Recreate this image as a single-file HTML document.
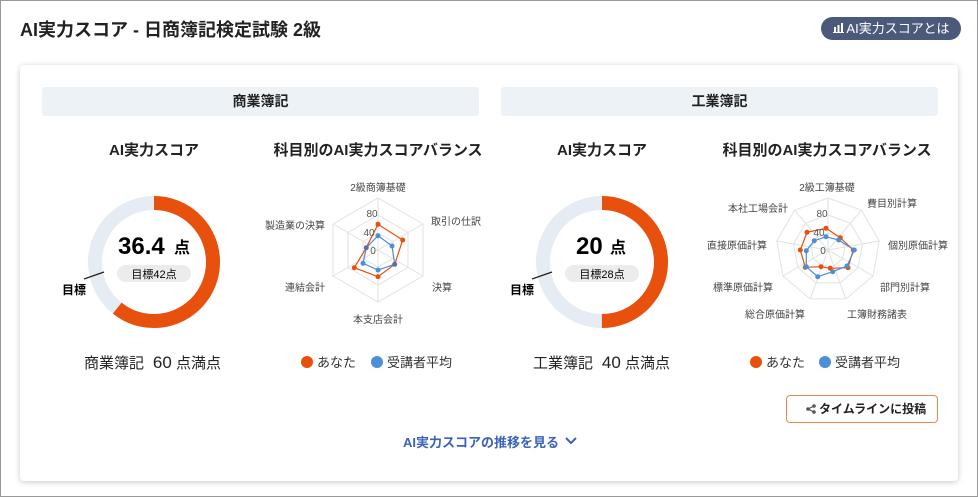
<!DOCTYPE html>
<html><head><meta charset="utf-8"><style>
*{margin:0;padding:0;box-sizing:border-box}
body{width:978px;height:497px;background:#fff;font-family:"Liberation Sans","Noto Sans CJK JP",sans-serif;color:#222;position:relative;overflow:hidden}
.frame{position:absolute;left:0;top:0;width:978px;height:497px;border:1px solid #999}
.t{position:absolute;white-space:nowrap}
.card{position:absolute;left:20px;top:65px;width:938px;height:416px;background:#fff;box-shadow:0 1px 6px rgba(0,0,0,.22);border-radius:4px}
.bar{position:absolute;top:87px;height:29px;background:#edf2f7;border-radius:3px;font-weight:bold;font-size:14px;text-align:center;line-height:29px}
svg{position:absolute;left:0;top:0}
.ic{position:static;display:inline-block;vertical-align:middle}
</style></head><body>
<div class="frame"></div>
<div class="t" style="left:20px;top:16px;font-size:18px;font-weight:bold">AI実力スコア - 日商簿記検定試験 2級</div>
<div class="t" style="left:821px;top:17px;width:140px;height:23px;border-radius:12px;background:#4b5a7b;color:#fff;font-size:13px;line-height:23px;text-align:center"><svg class="ic" width="11" height="10" viewBox="0 0 11 10" style="margin-top:-3px"><rect x="1" y="4" width="2" height="5" fill="#fff"/><rect x="4.5" y="2" width="2" height="7" fill="#fff"/><rect x="8" y="0" width="2" height="9" fill="#fff"/><rect x="0" y="9" width="11" height="1" fill="#fff"/></svg> AI実力スコアとは</div>
<div class="card"></div>
<div class="bar" style="left:42px;width:437px">商業簿記</div>
<div class="bar" style="left:501px;width:437px">工業簿記</div>
<div class="t" style="left:104px;top:139px;width:100px;text-align:center;font-size:15px;font-weight:bold">AI実力スコア</div>
<div class="t" style="left:268px;top:139px;width:220px;text-align:center;font-size:15px;font-weight:bold">科目別のAI実力スコアバランス</div>
<div class="t" style="left:552px;top:139px;width:100px;text-align:center;font-size:15px;font-weight:bold">AI実力スコア</div>
<div class="t" style="left:717px;top:139px;width:220px;text-align:center;font-size:15px;font-weight:bold">科目別のAI実力スコアバランス</div>
<svg width="978" height="497" font-family="Liberation Sans,Noto Sans CJK JP,sans-serif">
<circle cx="154" cy="262" r="59" fill="none" stroke="#e6ecf4" stroke-width="14"/>
<circle cx="154" cy="262" r="59" fill="none" stroke="#e8500e" stroke-width="14" stroke-dasharray="225 400" transform="rotate(-90 154 262)"/>
<line x1="84" y1="279" x2="104" y2="272" stroke="#222" stroke-width="1.3"/>
<text x="62" y="294" font-size="12" font-weight="bold">目標</text>
<text x="118" y="254" font-size="24" font-weight="bold">36.4</text><text x="174" y="253" font-size="16" font-weight="bold">点</text>
<rect x="117" y="265" width="74" height="17" rx="8.5" fill="#ececec"/>
<text x="154" y="278" font-size="11" text-anchor="middle">目標42点</text>
<circle cx="602" cy="262" r="59" fill="none" stroke="#e6ecf4" stroke-width="14"/>
<circle cx="602" cy="262" r="59" fill="none" stroke="#e8500e" stroke-width="14" stroke-dasharray="185.4 400" transform="rotate(-90 602 262)"/>
<line x1="532" y1="279" x2="552" y2="272" stroke="#222" stroke-width="1.3"/>
<text x="510" y="294" font-size="12" font-weight="bold">目標</text>
<text x="576" y="254" font-size="24" font-weight="bold">20</text><text x="610" y="253" font-size="16" font-weight="bold">点</text>
<rect x="565" y="265" width="74" height="17" rx="8.5" fill="#ececec"/>
<text x="602" y="278" font-size="11" text-anchor="middle">目標28点</text>
<g transform="translate(378,250)" fill="none" stroke="#e2e2e2">
<polygon points="0,-52 45,-26 45,26 0,52 -45,26 -45,-26"/>
<polygon points="0,-35 30,-17.5 30,17.5 0,35 -30,17.5 -30,-17.5"/>
<polygon points="0,-17 15,-8.5 15,8.5 0,17 -15,8.5 -15,-8.5"/>
<path d="M0 0V-52M0 0L45 -26M0 0L45 26M0 0V52M0 0L-45 26M0 0L-45 -26"/>
<polygon points="0,-25.7 24.7,-10 16.7,14.3 0,26.7 -23.7,17.7 -11.7,-2.3" stroke="#e8500e" stroke-width="1.2"/>
<polygon points="0,-14.3 14,-4 16.7,14.3 0,20 -15,13.3 -11.7,-2.3" stroke="#4a8fd8" stroke-width="1.2"/>
<g stroke="none"><circle cx="0" cy="-25.7" r="2.5" fill="#e8500e"/><circle cx="24.7" cy="-10" r="2.5" fill="#e8500e"/><circle cx="0" cy="26.7" r="2.5" fill="#e8500e"/><circle cx="-23.7" cy="17.7" r="2.5" fill="#e8500e"/>
<circle cx="0" cy="-14.3" r="2.5" fill="#4a8fd8"/><circle cx="14" cy="-4" r="2.5" fill="#4a8fd8"/><circle cx="16.7" cy="14.3" r="2.5" fill="#5a6fa8"/><circle cx="0" cy="20" r="2.5" fill="#4a8fd8"/><circle cx="-15" cy="13.3" r="2.5" fill="#4a8fd8"/><circle cx="-11.7" cy="-2.3" r="2.5" fill="#5a6fa8"/></g>
<g stroke="none" fill="#555" font-size="10" text-anchor="middle"><text x="-6" y="-33">80</text><text x="-9" y="-14">40</text><text x="-5" y="4">0</text></g>
</g>
<g font-size="10" fill="#444" text-anchor="middle">
<text x="378" y="191">2級商簿基礎</text><text x="456" y="225">取引の仕訳</text><text x="442" y="291">決算</text><text x="378" y="323">本支店会計</text><text x="305" y="291">連結会計</text><text x="295" y="229">製造業の決算</text>
</g>
<g transform="translate(828,250)" fill="none" stroke="#e2e2e2">
<polygon points="0,-52 33.4,-39.8 51.2,-9 45,26 17.8,48.9 -17.8,48.9 -45,26 -51.2,-9 -33.4,-39.8"/>
<polygon points="0,-35 22.5,-26.8 34.5,-6.1 30.3,17.5 12,32.9 -12,32.9 -30.3,17.5 -34.5,-6.1 -22.5,-26.8"/>
<polygon points="0,-17 10.9,-13 16.7,-3 14.7,8.5 5.8,16 -5.8,16 -14.7,8.5 -16.7,-3 -10.9,-13"/>
<path d="M0 0V-52M0 0L33.4 -39.8M0 0L51.2 -9M0 0L45 26M0 0L17.8 48.9M0 0L-17.8 48.9M0 0L-45 26M0 0L-51.2 -9M0 0L-33.4 -39.8"/>
<polygon points="-2,-21.7 12.3,-12.3 25.3,0 20,17.7 2.3,18.3 -7,16.7 -22.7,17.3 -27.7,0 -21,-17.7" stroke="#e8500e" stroke-width="1.2"/>
<polygon points="-2,-13.3 10.7,-10 26.3,0 19,16 4.7,21.7 -10.3,26.7 -21.7,16.7 -21.7,0.7 -13.7,-9.3" stroke="#4a8fd8" stroke-width="1.2"/>
<g stroke="none" fill="#e8500e"><circle cx="-2" cy="-21.7" r="2.5"/><circle cx="12.3" cy="-12.3" r="2.5"/><circle cx="25.3" cy="0" r="2.5"/><circle cx="20" cy="17.7" r="2.5"/><circle cx="2.3" cy="18.3" r="2.5"/><circle cx="-7" cy="16.7" r="2.5"/><circle cx="-22.7" cy="17.3" r="2.5"/><circle cx="-27.7" cy="0" r="2.5"/><circle cx="-21" cy="-17.7" r="2.5"/></g>
<g stroke="none" fill="#4a8fd8"><circle cx="-2" cy="-13.3" r="2.5"/><circle cx="10.7" cy="-10" r="2.5"/><circle cx="26.3" cy="0" r="2.5"/><circle cx="19" cy="16" r="2.5"/><circle cx="4.7" cy="21.7" r="2.5"/><circle cx="-10.3" cy="26.7" r="2.5"/><circle cx="-21.7" cy="16.7" r="2.5"/><circle cx="-21.7" cy="0.7" r="2.5"/><circle cx="-13.7" cy="-9.3" r="2.5"/></g>
<g stroke="none" fill="#555" font-size="10" text-anchor="middle"><text x="-6" y="-33">80</text><text x="-9" y="-14">40</text><text x="-5" y="4">0</text></g>
</g>
<g font-size="10" fill="#444" text-anchor="middle">
<text x="827" y="191">2級工簿基礎</text><text x="892" y="207">費目別計算</text><text x="918" y="249">個別原価計算</text><text x="905" y="291">部門別計算</text><text x="877" y="318">工簿財務諸表</text><text x="775" y="318">総合原価計算</text><text x="743" y="291">標準原価計算</text><text x="737" y="249">直接原価計算</text><text x="758" y="212">本社工場会計</text>
</g>
<circle cx="307" cy="362" r="6" fill="#e8500e"/><text x="317" y="367" font-size="13" fill="#333">あなた</text>
<circle cx="377" cy="362" r="6" fill="#4a8fd8"/><text x="387" y="367" font-size="13" fill="#333">受講者平均</text>
<circle cx="756" cy="362" r="6" fill="#e8500e"/><text x="766" y="367" font-size="13" fill="#333">あなた</text>
<circle cx="825" cy="362" r="6" fill="#4a8fd8"/><text x="835" y="367" font-size="13" fill="#333">受講者平均</text>
<g fill="#555" stroke="#555" stroke-width="1.2"><line x1="808" y1="409" x2="814" y2="406"/><line x1="808" y1="409" x2="814" y2="412"/><circle cx="808" cy="409" r="1.8" stroke="none"/><circle cx="814" cy="406" r="1.8" stroke="none"/><circle cx="814" cy="412" r="1.8" stroke="none"/></g>
<path d="M566 438L571 443L576 438" fill="none" stroke="#3a62b8" stroke-width="2"/>
</svg>
<div class="t" style="left:84px;top:352px;font-size:15px">商業簿記 <span style="font-size:17px">&nbsp;60</span> 点満点</div>
<div class="t" style="left:533px;top:352px;font-size:15px">工業簿記 <span style="font-size:17px">&nbsp;40</span> 点満点</div>
<div class="t" style="left:786px;top:395px;width:152px;height:28px;border:1px solid #e8874e;border-radius:4px;line-height:26px;font-size:12px;font-weight:bold;padding-left:32px">タイムラインに投稿</div>
<div class="t" style="left:403px;top:432px;font-size:13px;font-weight:bold;color:#3a62b8">AI実力スコアの推移を見る</div>
</body></html>
